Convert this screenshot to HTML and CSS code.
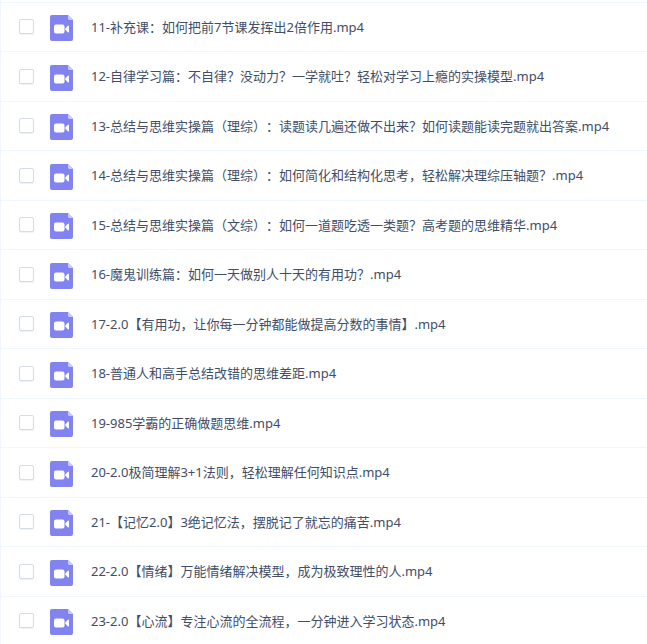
FILE: index.html
```
<!DOCTYPE html>
<html lang="zh-CN">
<head>
    <meta charset="UTF-8">
    <meta name="viewport" content="width=device-width, initial-scale=1.0">
    <title>文件列表</title>
    <link rel="stylesheet" href="styles.css">
</head>
<body>

<!-- 视频图标 -->
<svg class="sprite" aria-hidden="true">
    <symbol id="icon-video" viewBox="0 0 23 26">
        <path fill="#8183f1" d="M2 0H18L23 5V24a2 2 0 0 1-2 2H2a2 2 0 0 1-2-2V2a2 2 0 0 1 2-2z"/>
        <path fill="#c9caf9" d="M18 0L23 5H19.500a1.500 1.500 0 0 1-1.500-1.500z"/>
        <rect fill="#fff" x="4" y="9.500" width="10.500" height="9" rx="2"/>
        <path fill="#fff" d="M15.300 13.500L17.500 11Q19 9.800 19 11.400V16.600Q19 18.200 17.500 17L15.300 14.500z"/>
    </symbol>
</svg>

<ul class="file-list">
    <li class="file-item">
        <input type="checkbox" class="check" id="f11">
        <svg class="icon"><use href="#icon-video"/></svg>
        <label class="name" for="f11">11-补充课：如何把前7节课发挥出2倍作用.mp4</label>
    </li>
    <li class="file-item">
        <input type="checkbox" class="check" id="f12">
        <svg class="icon"><use href="#icon-video"/></svg>
        <label class="name" for="f12">12-自律学习篇：不自律？没动力？一学就吐？轻松对学习上瘾的实操模型.mp4</label>
    </li>
    <li class="file-item">
        <input type="checkbox" class="check" id="f13">
        <svg class="icon"><use href="#icon-video"/></svg>
        <label class="name" for="f13">13-总结与思维实操篇（理综）：读题读几遍还做不出来？如何读题能读完题就出答案.mp4</label>
    </li>
    <li class="file-item">
        <input type="checkbox" class="check" id="f14">
        <svg class="icon"><use href="#icon-video"/></svg>
        <label class="name" for="f14">14-总结与思维实操篇（理综）：如何简化和结构化思考，轻松解决理综压轴题？.mp4</label>
    </li>
    <li class="file-item">
        <input type="checkbox" class="check" id="f15">
        <svg class="icon"><use href="#icon-video"/></svg>
        <label class="name" for="f15">15-总结与思维实操篇（文综）：如何一道题吃透一类题？高考题的思维精华.mp4</label>
    </li>
    <li class="file-item">
        <input type="checkbox" class="check" id="f16">
        <svg class="icon"><use href="#icon-video"/></svg>
        <label class="name" for="f16">16-魔鬼训练篇：如何一天做别人十天的有用功？.mp4</label>
    </li>
    <li class="file-item">
        <input type="checkbox" class="check" id="f17">
        <svg class="icon"><use href="#icon-video"/></svg>
        <label class="name" for="f17">17-2.0【有用功，让你每一分钟都能做提高分数的事情】.mp4</label>
    </li>
    <li class="file-item">
        <input type="checkbox" class="check" id="f18">
        <svg class="icon"><use href="#icon-video"/></svg>
        <label class="name" for="f18">18-普通人和高手总结改错的思维差距.mp4</label>
    </li>
    <li class="file-item">
        <input type="checkbox" class="check" id="f19">
        <svg class="icon"><use href="#icon-video"/></svg>
        <label class="name" for="f19">19-985学霸的正确做题思维.mp4</label>
    </li>
    <li class="file-item">
        <input type="checkbox" class="check" id="f20">
        <svg class="icon"><use href="#icon-video"/></svg>
        <label class="name" for="f20">20-2.0极简理解3+1法则，轻松理解任何知识点.mp4</label>
    </li>
    <li class="file-item">
        <input type="checkbox" class="check" id="f21">
        <svg class="icon"><use href="#icon-video"/></svg>
        <label class="name" for="f21">21-【记忆2.0】3绝记忆法，摆脱记了就忘的痛苦.mp4</label>
    </li>
    <li class="file-item">
        <input type="checkbox" class="check" id="f22">
        <svg class="icon"><use href="#icon-video"/></svg>
        <label class="name" for="f22">22-2.0【情绪】万能情绪解决模型，成为极致理性的人.mp4</label>
    </li>
    <li class="file-item">
        <input type="checkbox" class="check" id="f23">
        <svg class="icon"><use href="#icon-video"/></svg>
        <label class="name" for="f23">23-2.0【心流】专注心流的全流程，一分钟进入学习状态.mp4</label>
    </li>
</ul>

</body>
</html>
```
FILE: styles.css
```
body {
    margin: 0;
    background-color: #ffffff;
    color: #424e67;
    font-family: "Noto Sans", "Noto Sans CJK SC", sans-serif;
    font-size: 13px;
    line-height: 20px;
    text-spacing-trim: space-all;
}
.sprite {
    display: none;
}
.file-list {
    list-style: none;
    margin: 0;
    padding: 2px 0 0;
    border-left: 1px solid #f1f6fd;
}
.file-item {
    display: flex;
    align-items: center;
    box-sizing: border-box;
    height: 49px;
    padding: 1px 18px 0;
    border-top: 1px solid #f0f6fd;
}
.file-item:nth-child(even) {
    height: 50px;
}
.check {
    appearance: none;
    flex: none;
    box-sizing: border-box;
    width: 15px;
    height: 15px;
    margin: 0 16px 2px 0;
    border: 1px solid #d5dce6;
    border-radius: 2px;
    background-color: #ffffff;
    box-shadow: 0 1px 0 #f0f3f7;
}
.check:checked {
    background-color: #8183f1;
    border-color: #8183f1;
}
.icon {
    flex: none;
    width: 23px;
    height: 26px;
    margin: 1px 18px 0 0;
}
.name {
    margin-bottom: 2px;
    white-space: nowrap;
}
```
